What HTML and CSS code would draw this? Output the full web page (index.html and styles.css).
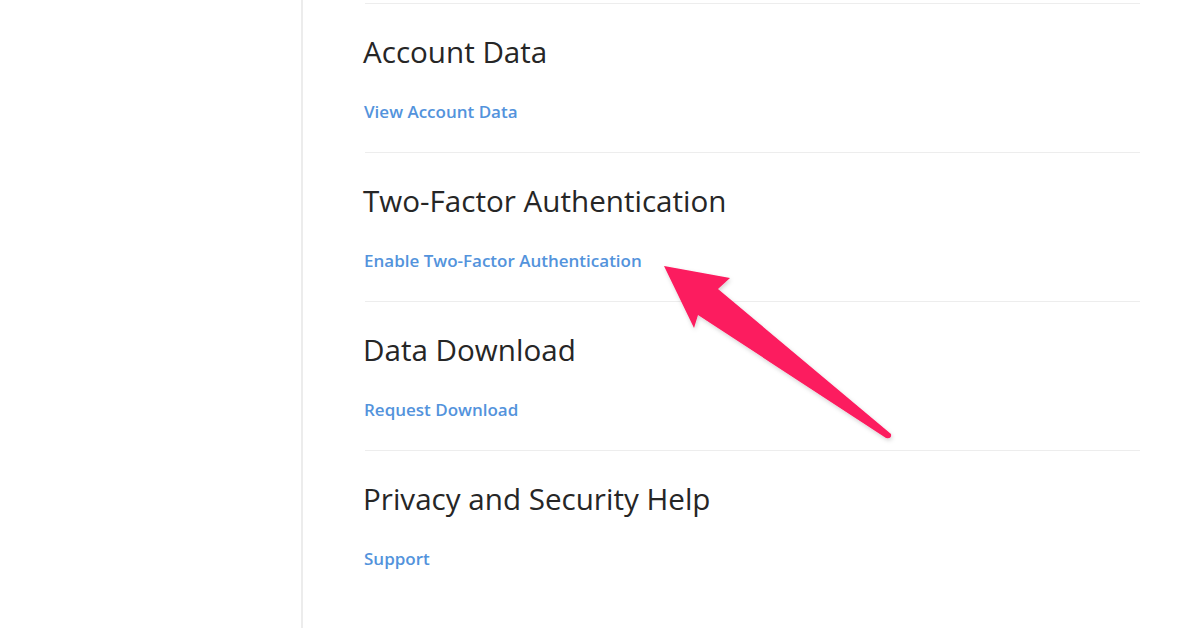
FILE: index.html
```html
<!DOCTYPE html>
<html>
<head>
<meta charset="utf-8">
<link rel="stylesheet" href="styles.css">
</head>
<body>
<div class="page">
  <aside class="sidebar"></aside>
  <main class="content">
    <section class="section">
      <h2 class="title">Account Data</h2>
      <a class="link" href="#">View Account Data</a>
    </section>
    <section class="section">
      <h2 class="title">Two-Factor Authentication</h2>
      <a class="link" href="#">Enable Two-Factor Authentication</a>
    </section>
    <section class="section">
      <h2 class="title">Data Download</h2>
      <a class="link" href="#">Request Download</a>
    </section>
    <section class="section">
      <h2 class="title">Privacy and Security Help</h2>
      <a class="link" href="#">Support</a>
    </section>
  </main>
</div>
<svg class="arrow" width="1200" height="628" viewBox="0 0 1200 628">
  <defs>
    <filter id="sh" x="-20%" y="-20%" width="140%" height="140%">
      <feDropShadow dx="1" dy="2" stdDeviation="2" flood-color="#000" flood-opacity="0.18"/>
    </filter>
  </defs>
  <path filter="url(#sh)" fill="#fc1b5e" d="M664 266 L730 278 L718 289 L891 434 Q892 439 886 438 L698 315 L694 328 Z"/>
</svg>
</body>
</html>
```

FILE: styles.css
```css
html, body {
  margin: 0;
  padding: 0;
  background: #ffffff;
}
body {
  width: 1200px;
  height: 628px;
  overflow: hidden;
  position: relative;
  font-family: "Open Sans", "Noto Sans", sans-serif;
}
.page {
  display: flex;
  height: 628px;
}
.sidebar {
  width: 301px;
  flex: none;
  border-right: 2px solid #ececec;
}
.content {
  flex: none;
  width: 777px;
  margin-left: 60px;
  padding-top: 3px;
}
.section {
  border-top: 1px solid #ededed;
  margin-left: 2px;
  height: 149px;
  box-sizing: border-box;
  padding-top: 30px;
}
.title {
  margin: 0 0 0 -2px;
  font-size: 29.6px;
  line-height: 36px;
  font-weight: 400;
  color: #262626;
}
.link {
  display: inline-block;
  margin: 32px 0 0 -1px;
  font-size: 17px;
  line-height: 20px;
  font-weight: 600;
  color: #5393dc;
  text-decoration: none;
}
.arrow {
  position: absolute;
  left: 0;
  top: 0;
  pointer-events: none;
}
```
